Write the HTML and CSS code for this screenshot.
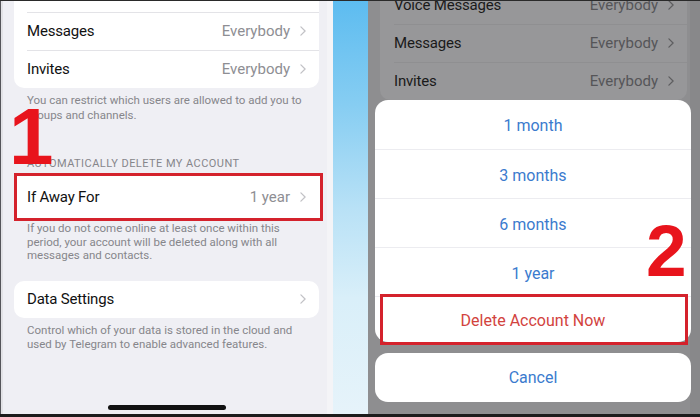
FILE: index.html
```html
<!DOCTYPE html>
<html>
<head>
<meta charset="utf-8">
<link rel="stylesheet" href="styles.css">
</head>
<body>
<div class="screen">
  <div class="panels">
    <section class="phone left">
      <div class="card top-card">
        <div class="row"></div>
        <div class="row"><span class="label">Messages</span><span class="value">Everybody</span><svg class="chev" viewBox="0 0 7 12"><path d="M1 1l5 5-5 5"/></svg></div>
        <div class="row"><span class="label">Invites</span><span class="value">Everybody</span><svg class="chev" viewBox="0 0 7 12"><path d="M1 1l5 5-5 5"/></svg></div>
      </div>
      <p class="note note1">You can restrict which users are allowed to add you to<br>groups and channels.</p>
      <p class="header">AUTOMATICALLY DELETE MY ACCOUNT</p>
      <div class="highlight-row">
        <div class="row single"><span class="label">If Away For</span><span class="value">1 year</span><svg class="chev" viewBox="0 0 7 12"><path d="M1 1l5 5-5 5"/></svg></div>
      </div>
      <p class="note note2">If you do not come online at least once within this<br>period, your account will be deleted along with all<br>messages and contacts.</p>
      <div class="card data-card">
        <div class="row single"><span class="label">Data Settings</span><span class="value"></span><svg class="chev" viewBox="0 0 7 12"><path d="M1 1l5 5-5 5"/></svg></div>
      </div>
      <p class="note note3">Control which of your data is stored in the cloud and<br>used by Telegram to enable advanced features.</p>
      <div class="home-bar"></div>
      <span class="step step1">1</span>
    </section>
    <div class="divider"></div>
    <section class="phone right">
      <div class="card dim-card">
        <div class="row"><span class="label">Voice Messages</span><span class="value">Everybody</span><svg class="chev" viewBox="0 0 7 12"><path d="M1 1l5 5-5 5"/></svg></div>
        <div class="row"><span class="label">Messages</span><span class="value">Everybody</span><svg class="chev" viewBox="0 0 7 12"><path d="M1 1l5 5-5 5"/></svg></div>
        <div class="row"><span class="label">Invites</span><span class="value">Everybody</span><svg class="chev" viewBox="0 0 7 12"><path d="M1 1l5 5-5 5"/></svg></div>
      </div>
      <div class="sheet-stack">
        <div class="sheet">
          <div class="option">1 month</div>
          <div class="option">3 months</div>
          <div class="option">6 months</div>
          <div class="option">1 year</div>
          <div class="option danger">Delete Account Now</div>
          <div class="sheet-mark"></div>
        </div>
        <div class="cancel">Cancel</div>
      </div>
      <span class="step step2">2</span>
    </section>
  </div>
</div>
</body>
</html>
```

FILE: styles.css
```css
* { box-sizing: border-box; }
html, body { margin: 0; padding: 0; }
body {
  width: 700px;
  height: 417px;
  overflow: hidden;
  font-family: Roboto, "Noto Sans", "Liberation Sans", sans-serif;
  background: #1e1e1e;
}
.screen {
  width: 700px;
  height: 417px;
  border-top: 1px solid #2a2a2a;
  border-bottom: 3px solid #1c1c1c;
  display: flex;
  flex-direction: column;
}
.panels {
  flex: 1;
  display: flex;
  min-height: 0;
}
.phone {
  position: relative;
  overflow: hidden;
  display: flex;
  flex-direction: column;
}
.left {
  width: 333px;
  background: #efeff4;
  box-shadow: inset 1px 0 0 #55555a, inset 3px 0 0 #e2e2e6, inset -6px 0 0 #f4f4f7;
}
.divider {
  width: 35px;
  background: linear-gradient(to bottom, #5dbcf0 0%, #86cdf2 25%, #b8e1f6 50%, #d9eff9 72%, #e6f3fa 100%);
}
.right {
  width: 332px;
  background: #8e8e90;
  box-shadow: inset -10px 0 0 #88888a;
}

.card {
  background: #fff;
  border-radius: 10px;
  margin-left: 14px;
  width: 305px;
  overflow: hidden;
}
.top-card { margin-top: -27px; }
.row {
  position: relative;
  height: 38px;
  display: flex;
  align-items: center;
  padding: 0 13px 0 13px;
  font-size: 15px;
}
.label { letter-spacing: -0.2px; }
.row + .row::before {
  content: "";
  position: absolute;
  left: 13px;
  right: 0;
  top: 0;
  height: 1px;
  background: #e3e3e7;
}
.row.single { height: 37px; }
.label { color: #111; flex: 1; }
.value { color: #8e8e93; margin-right: 10px; }
.chev {
  width: 6px;
  height: 10px;
  fill: none;
  stroke: #c2c2c6;
  stroke-width: 1.5;
  stroke-linecap: round;
  stroke-linejoin: round;
}

.note {
  margin: 0;
  padding-left: 27px;
  font-size: 11.5px;
  line-height: 15px;
  color: #86868b;
}
.note1 { margin-top: 5px; }
.header {
  margin: 34px 0 0;
  padding-left: 27px;
  font-size: 11px;
  line-height: 14px;
  color: #86868b;
  letter-spacing: 0.45px;
}
.highlight-row {
  margin: 2px 0 0 14px;
  width: 309px;
  height: 48px;
  border: 3px solid #d4222c;
  background: #fff;
  display: flex;
  align-items: center;
}
.highlight-row .row { flex: 1; padding-left: 10px; padding-right: 14px; }
.note2 { line-height: 13.5px; margin-top: 1px; }
.data-card { margin-top: 18px; }
.note3 { margin-top: 5px; line-height: 14.5px; }
.home-bar {
  margin: auto 0 4px 108px;
  width: 118px;
  height: 5px;
  border-radius: 3px;
  background: #111;
}

.step {
  position: absolute;
  font-family: "Liberation Sans", Arial, sans-serif;
  font-weight: 700;
  color: #e8141c;
}
.step1 {
  left: 9px;
  top: 96px;
  font-size: 80px;
  line-height: 80px;
}
.step2 {
  left: 278px;
  top: 213px;
  font-size: 73px;
  line-height: 73px;
}

.dim-card {
  background: #979799;
  margin-left: 12px;
  width: 307px;
  margin-top: -15px;
}
.dim-card .row { padding-left: 14px; }
.dim-card .row + .row::before { background: #8f8f91; left: 14px; }
.dim-card .label { color: #1a1a1a; }
.dim-card .value { color: #555558; }
.dim-card .chev { stroke: #5e5e60; }

.sheet-stack {
  position: absolute;
  left: 7px;
  top: 99px;
  width: 316px;
  display: flex;
  flex-direction: column;
  gap: 11px;
}
.sheet {
  position: relative;
  background: #fff;
  border-radius: 13px;
}
.option {
  height: 49px;
  padding-top: 2px;
  display: flex;
  align-items: center;
  justify-content: center;
  font-size: 16px;
  color: #3b7bce;
}
.option + .option { border-top: 1px solid #ececf0; }
.option.danger { height: 46px; color: #d2433e; }
.sheet-mark {
  position: absolute;
  left: 5px;
  top: 194px;
  width: 308px;
  height: 51px;
  border: 3px solid #d4222c;
}
.cancel {
  height: 49px;
  background: #fff;
  border-radius: 13px;
  display: flex;
  align-items: center;
  justify-content: center;
  font-size: 16px;
  color: #3b7bce;
}
```
